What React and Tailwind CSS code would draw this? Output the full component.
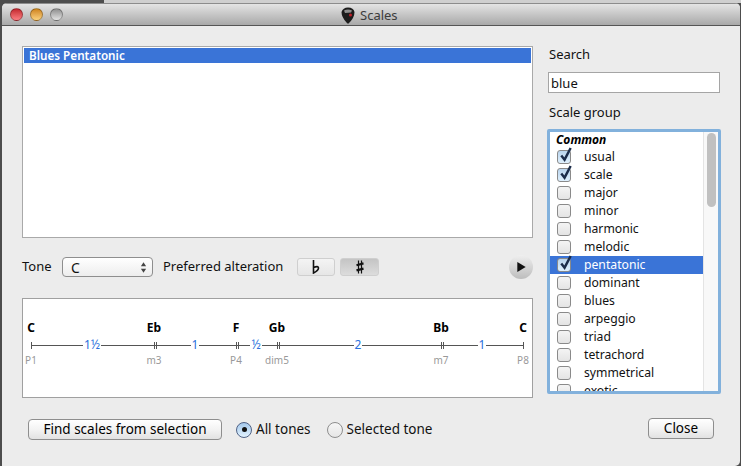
import React from 'react'

const groups = [
  ['usual', true], ['scale', true], ['major'], ['minor'], ['harmonic'], ['melodic'],
  ['pentatonic', true, true], ['dominant'], ['blues'], ['arpeggio'], ['triad'],
  ['tetrachord'], ['symmetrical'], ['exotic'],
]

const notes = [
  { name: 'C', label: 'P1', pos: 'left-[8px]' },
  { name: 'Eb', label: 'm3', pos: 'left-[131px]' },
  { name: 'F', label: 'P4', pos: 'left-[213px]' },
  { name: 'Gb', label: 'dim5', pos: 'left-[254px]' },
  { name: 'Bb', label: 'm7', pos: 'left-[418px]' },
  { name: 'C', label: 'P8', pos: 'left-[500px]' },
]

const steps = [
  { text: '1½', pos: 'left-[69px]' },
  { text: '1', pos: 'left-[172px]' },
  { text: '½', pos: 'left-[233px]' },
  { text: '2', pos: 'left-[335px]' },
  { text: '1', pos: 'left-[459px]' },
]

const Light = ({ color }) => (
  <span className={`w-[13px] h-[13px] rounded-full border border-black/30 ${color}`} />
)

const Check = ({ on }) => (
  <span className={`relative shrink-0 w-[14px] h-[14px] rounded-[3px] border border-[#8a8a8a] ${on ? 'bg-gradient-to-b from-[#b9d4ee] to-[#dff0fd] border-[#4a5f7e]' : 'bg-gradient-to-b from-[#f4f4f4] to-[#e4e4e4]'}`}>
    {on && (
      <svg viewBox="0 0 16 18" className="absolute left-[0px] top-[-5px] w-[15px] h-[17px]">
        <path d="M3.5 10 L7 14.5 L13.5 2" fill="none" stroke="#1b2c4a" strokeWidth="2.6" />
      </svg>
    )}
  </span>
)

const Button = ({ children, className }) => (
  <button className={`h-[21px] rounded-[4px] border border-[#8e8e8e] bg-gradient-to-b from-white via-[#f3f3f3] to-[#e2e2e2] text-[13.5px] text-black leading-none ${className}`}>
    {children}
  </button>
)

const App = () => {
  return (
    <div className="w-[741px] h-[466px] bg-[#4d4d4d] overflow-hidden font-['Noto_Sans',sans-serif] text-[13px] text-[#111]">
      <div className="h-[3px] ml-[104px] bg-[#cfcfcf]" />
      <div className="ml-[2px] mr-[1px] h-[463px] bg-[#ececec] rounded-t-[5px] rounded-br-[5px] flex flex-col overflow-hidden">
        <div className="h-[23px] shrink-0 flex items-center relative bg-gradient-to-b from-[#e4e4e4] to-[#a9a9a9] border-t border-t-[#8c8c8c] border-b border-b-[#555]">
          <div className="flex items-center gap-[7px] pl-[8px]">
            <Light color="bg-gradient-to-b from-[#c4252f] to-[#fb7d82]" />
            <Light color="bg-gradient-to-b from-[#cf8418] to-[#fbd27c]" />
            <Light color="bg-gradient-to-b from-[#8f8f8f] to-[#e4e4e4]" />
          </div>
          <div className="absolute left-[339px] top-[2px] flex items-center gap-[5px]">
            <svg viewBox="0 0 14 17" className="w-[14px] h-[17px]">
              <path d="M0.5 5 Q2 0.5 7 0.5 Q12.5 0.5 13.5 5 Q13.5 11 7.5 16.5 Q6.5 17 5.5 15.5 Q0.5 10 0.5 5Z" fill="#1c1c1c" />
              <path d="M3 3.5 Q7 1.5 11 3.5 L10 5.5 L4 6Z" fill="#8e8e8e" />
              <circle cx="9.5" cy="8" r="1.5" fill="#c0202a" />
            </svg>
            <span className="text-[13px] text-[#3c3c3c]">Scales</span>
          </div>
        </div>

        <div className="flex-1 flex pl-[20px] pt-[20px]">
          <div className="w-[511px] shrink-0 flex flex-col">
            <div className="h-[192px] bg-white border border-[#a9a9a9] p-[1px]">
              <div className="h-[15px] bg-[#3a74d7] text-white font-semibold text-[11.7px] leading-[15px] pl-[5px]">Blues Pentatonic</div>
            </div>

            <div className="h-[24px] mt-[17px] flex items-center">
              <span className="w-[40px]">Tone</span>
              <div className="w-[91px] h-[20px] rounded-[4px] border border-[#8e8e8e] bg-gradient-to-b from-white to-[#ededed] flex items-center justify-between pl-[8px] pr-[5px]">
                <span className="text-[14px]">C</span>
                <svg viewBox="0 0 8 12" className="w-[7px] h-[11px]">
                  <path d="M4 0 L7 4.5 H1Z M4 12 L7 7.5 H1Z" fill="#444" />
                </svg>
              </div>
              <span className="ml-[10px] w-[134px]">Preferred alteration</span>
              <div className="w-[38px] h-[18px] rounded-[3px] border border-[#cfcfcf] bg-gradient-to-b from-[#f4f4f4] to-[#e6e6e6] flex items-center justify-center">
                <svg viewBox="0 0 8 14" className="w-[8px] h-[14px]">
                  <path d="M1.5 0 V13 Q6.5 10.5 6.5 8 Q6.5 5.5 1.5 7.5" fill="none" stroke="#111" strokeWidth="1.6" />
                </svg>
              </div>
              <div className="ml-[5px] w-[39px] h-[18px] rounded-[3px] border border-[#cfcfcf] bg-gradient-to-b from-[#c4c4c4] to-[#dcdcdc] flex items-center justify-center">
                <svg viewBox="0 0 8 14" className="w-[8px] h-[14px]">
                  <path d="M2.5 0.5 V13.5 M5.5 0.5 V13.5" stroke="#111" strokeWidth="1.2" />
                  <path d="M0.5 5.2 L7.5 3.4 M0.5 10.4 L7.5 8.6" stroke="#111" strokeWidth="2.2" />
                </svg>
              </div>
              <div className="ml-auto w-[24px] h-[24px] rounded-full bg-gradient-to-b from-[#efefef] to-[#bdbdbd] flex items-center justify-center">
                <svg viewBox="0 0 10 12" className="w-[9px] h-[10px] ml-[1px]">
                  <path d="M0 0 L10 6 L0 12Z" fill="#111" />
                </svg>
              </div>
            </div>

            <div className="relative h-[100px] mt-[19px] bg-white border border-[#a0a0a0]">
              <div className="absolute left-[8px] w-[492px] top-[46px] h-[1px] bg-[#555]" />
              {notes.map((n, i) => (
                <React.Fragment key={i}>
                  <span className={`absolute ${n.pos} top-[43px] w-[1px] h-[7px] bg-[#555] ${i > 0 && i < 5 ? 'shadow-[2px_0_0_#555]' : ''}`} />
                  <span className={`absolute ${n.pos} top-[21px] w-0 flex justify-center text-[12px] font-bold text-black leading-[16px]`}>{n.name}</span>
                  <span className={`absolute ${n.pos} top-[54px] w-0 flex justify-center text-[10px] text-[#999] leading-[14px]`}>{n.label}</span>
                </React.Fragment>
              ))}
              {steps.map((s, i) => (
                <span key={i} className={`absolute ${s.pos} top-[38px] w-0 flex justify-center`}>
                  <span className="bg-white px-[1px] text-[12px] text-[#2a6fdc] leading-[16px]">{s.text}</span>
                </span>
              ))}
            </div>

            <div className="flex items-center mt-[21px] pl-[6px] text-[13.5px]">
              <Button className="w-[194px]">Find scales from selection</Button>
              <span className="ml-[14px] w-[16px] h-[16px] rounded-full border border-[#4f6286] bg-gradient-to-b from-[#a5c9ec] to-[#e1f2fe] flex items-center justify-center">
                <span className="w-[5px] h-[5px] rounded-full bg-[#111]" />
              </span>
              <span className="ml-[4px]">All tones</span>
              <span className="ml-[16px] w-[16px] h-[16px] rounded-full border border-[#8e8e8e] bg-gradient-to-b from-[#f6f6f6] to-[#e6e6e6]" />
              <span className="ml-[4px]">Selected tone</span>
            </div>
          </div>

          <div className="w-[174px] ml-[14px] shrink-0 flex flex-col">
            <span className="leading-[18px] -mt-[1px] ml-[2px]">Search</span>
            <input readOnly value="blue" className="mt-[9px] ml-[1px] w-[172px] h-[21px] bg-white border border-[#a5a5a5] px-[2px] text-[13px] text-[#111] outline-none" />
            <span className="leading-[18px] mt-[10px] ml-[2px]">Scale group</span>
            <div className="mt-[8px] h-[265px] rounded-[2px] border-[3px] border-[#82b1dc] bg-white overflow-hidden flex">
              <div className="flex-1 min-w-0">
                <div className="h-[16px] pl-[6px] text-[12px] font-bold italic leading-[16px] text-black">Common</div>
                {groups.map(([name, on, sel]) => (
                  <div key={name} className={`h-[18px] flex items-center pl-[7px] ${sel ? 'bg-[#3a74d7] text-white' : ''}`}>
                    <Check on={on} />
                    <span className="ml-[13px] pt-[1px] text-[12.2px] leading-none">{name}</span>
                  </div>
                ))}
              </div>
              <div className="w-[15px] shrink-0 border-l border-[#e4e4e4] bg-[#f8f8f8] pl-[3px] pt-[1px]">
                <div className="w-[9px] h-[74px] rounded-full bg-[#c0c0c0]" />
              </div>
            </div>
            <Button className="self-end mt-[24px] mr-[7px] w-[66px]">Close</Button>
          </div>
        </div>
      </div>
    </div>
  )
}

export default App
